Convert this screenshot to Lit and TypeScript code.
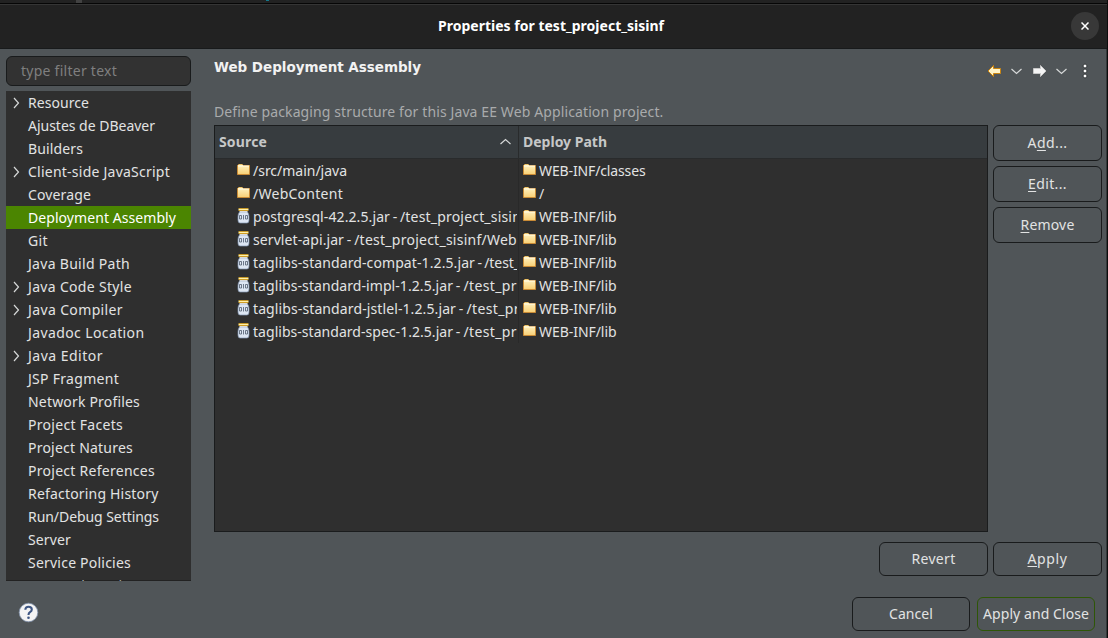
import { LitElement, html, css, nothing } from "lit";
import { customElement, property } from "lit/decorators.js";

/* A single line of text whose tracking is adjusted to fill a given advance width. */
@customElement("ui-label")
class UiLabel extends LitElement {
  @property({ type: Number }) width = 0;
  @property() text = "";
  @property() mnemonic = "";

  static styles = css`
    :host { display: block; flex: none; white-space: pre; }
    .line { display: inline-block; }
    .key { text-decoration: underline; text-underline-offset: 2px; text-decoration-thickness: 1px; text-decoration-skip-ink: none; }
  `;

  async updated() {
    await document.fonts.ready;
    const line = this.renderRoot.querySelector<HTMLElement>(".line")!;
    line.style.letterSpacing = "0px";
    const natural = line.getBoundingClientRect().width;
    if (this.width) line.style.letterSpacing = `${(this.width - natural) / this.text.length}px`;
  }

  render() {
    const i = this.mnemonic ? this.text.indexOf(this.mnemonic) : -1;
    return i < 0
      ? html`<span class="line">${this.text}</span>`
      : html`<span class="line">${this.text.slice(0, i)}<span class="key">${this.mnemonic}</span>${this.text.slice(i + 1)}</span>`;
  }
}

type TreeItem = [name: string, width: number, expandable?: boolean];

const TREE: TreeItem[] = [
  ["Resource", 61, true],
  ["Ajustes de DBeaver", 127],
  ["Builders", 55],
  ["Client-side JavaScript", 142, true],
  ["Coverage", 63],
  ["Deployment Assembly", 148],
  ["Git", 20],
  ["Java Build Path", 102],
  ["Java Code Style", 104, true],
  ["Java Compiler", 95, true],
  ["Javadoc Location", 116.5],
  ["Java Editor", 75, true],
  ["JSP Fragment", 91],
  ["Network Profiles", 112],
  ["Project Facets", 95],
  ["Project Natures", 105],
  ["Project References", 127],
  ["Refactoring History", 130.5],
  ["Run/Debug Settings", 131],
  ["Server", 43],
  ["Service Policies", 103],
  ["Targeted Runtimes", 121],
];

interface Entry { icon: "folder" | "jar"; name: string; w: number; path?: string; pw?: number; target: string; tw: number; }

const ENTRIES: Entry[] = [
  { icon: "folder", name: "/src/main/java", w: 94, target: "WEB-INF/classes", tw: 106.5 },
  { icon: "folder", name: "/WebContent", w: 90, target: "/", tw: 6 },
  { icon: "jar", name: "postgresql-42.2.5.jar", w: 137, path: " - /test_project_sisin", pw: 131, target: "WEB-INF/lib", tw: 77.5 },
  { icon: "jar", name: "servlet-api.jar", w: 91, path: " - /test_project_sisinf/Web", pw: 173, target: "WEB-INF/lib", tw: 77.5 },
  { icon: "jar", name: "taglibs-standard-compat-1.2.5.jar", w: 222, path: " - /test_", pw: 45, target: "WEB-INF/lib", tw: 77.5 },
  { icon: "jar", name: "taglibs-standard-impl-1.2.5.jar", w: 200, path: " - /test_pr", pw: 64, target: "WEB-INF/lib", tw: 77.5 },
  { icon: "jar", name: "taglibs-standard-jstlel-1.2.5.jar", w: 203, path: " - /test_pr", pw: 64, target: "WEB-INF/lib", tw: 77.5 },
  { icon: "jar", name: "taglibs-standard-spec-1.2.5.jar", w: 200, path: " - /test_pr", pw: 64, target: "WEB-INF/lib", tw: 77.5 },
];

const folder = html`<svg class="ico" width="14" height="16" viewBox="0 0 14 16">
  <defs><linearGradient id="f" x1="0" y1="0" x2="0" y2="1"><stop offset="0" stop-color="#fff3c4"/><stop offset="1" stop-color="#f8cf74"/></linearGradient></defs>
  <path d="M.5 12.500V3.500L1.500 2.500H5.500L6.500 3.500H12.500V12.500Z" fill="url(#f)" stroke="#c98a35"/>
  <path d="M1 4H12" stroke="#fffbe6"/><path d="M2 2.500H5" stroke="#e9c46a"/>
</svg>`;

const jar = html`<svg class="ico" width="14" height="16" viewBox="0 0 14 16">
  <path d="M2.500 4H10.500Q12 6 12 8.500V12Q12 15 10 15H3Q1 15 1 12V8.500Q1 6 2.500 4Z" fill="#dde6f3" stroke="#8296b3" stroke-width=".7"/>
  <path d="M1.500 .5H11.500" stroke="#c79a2a"/><path d="M1.500 1.500H11.500" stroke="#fff0a8"/><path d="M1.500 2.500H11.500" stroke="#cf9d25"/>
  <path d="M2.500 3.700H10.500" stroke="#f8f9fc"/>
  <path d="M2.500 7.500H4.500V11H2.500ZM6.500 7V11.500M8.500 7.500H10.500V11H8.500Z" fill="none" stroke="#4e5a6c" stroke-width=".8"/>
</svg>`;

const chevron = (d: string, w: number, h: number) =>
  html`<svg width=${w} height=${h} viewBox="0 0 ${w} ${h}"><path d=${d} fill="none" stroke="#d6d8d8" stroke-width="1.2"/></svg>`;

@customElement("app-root")
class AppRoot extends LitElement {
  static styles = css`
    :host { display: block; }
    * { box-sizing: border-box; }
    svg { display: block; flex: none; }
    .window {
      width: 1108px; height: 638px; overflow: hidden; display: flex; flex-direction: column;
      background: #505558; color: #e2e3e3; font: 14px/23px "Noto Sans", "Open Sans", sans-serif;
      border-right: 1px solid #0c0c0c;
    }
    .behind { height: 3px; flex: none; background: #222; display: flex; }
    .mark { width: 6px; height: 3px; margin-left: 76px; background: #424242; }
    .dot { width: 3px; height: 1px; margin-left: 184px; background: #14798c; }
    .title {
      height: 46px; flex: none; background: #222; border-top: 1px solid #060606; border-bottom: 1px solid #181a1b;
      box-shadow: inset 0 1px #353535; display: grid; grid-template-columns: 1fr auto 1fr; align-items: center;
      font-weight: 700; color: #fff; padding-right: 8px; padding-left: 3px;
    }
    .title ui-label { grid-column: 2; padding-bottom: 2px; }
    .close { justify-self: end; width: 28px; height: 28px; border-radius: 50%; background: #383838; display: grid; place-items: center; }
    .main { height: 533px; flex: none; display: flex; border-right: 1px solid #34383a; }
    .side { width: 191px; padding: 7px 0 0 6px; flex: none; }
    .filter { height: 30px; border: 1px solid #191b1c; border-radius: 6px; background: #323232; color: #7f7f7f; padding: 2px 14px; }
    .tree { margin-top: 5px; height: 490px; overflow: hidden; background: linear-gradient(#222, #222) 0 100% / 100% 1px no-repeat #2f2f2f; }
    .node { height: 23px; display: flex; }
    .node:last-child { color: #b0b1b1; }
    .selected { background: #4b8501; color: #fff; }
    .twisty { width: 22px; padding: 6px 0 0 7px; }
    .pane { width: 888px; margin-left: 23px; padding-top: 6px; flex: none; }
    .head { display: flex; height: 45px; }
    .heading { font: 700 13.500px/24px "DejaVu Sans", sans-serif; flex: 1; color: #f2f2f2; }
    .tools { width: 115px; display: flex; align-items: center; height: 32px; }
    .gap { margin: 0 10px 0 9px; }
    .gap.last { margin-right: 15px; }
    .hint { color: #a9abac; height: 25px; }
    .content { display: flex; gap: 5px; }
    .table { width: 774px; height: 407px; border: 1px solid #1a1c1d; background: #2f2f2f; }
    .thead { display: flex; height: 33px; background: #373c3f; border-bottom: 1px solid #292b2c; font-weight: 700; color: #c6c8c8; line-height: 32px; padding-left: 4px; }
    .src { width: 300px; border-right: 1px solid #292b2c; display: flex; justify-content: space-between; align-items: center; padding-right: 7px; }
    .dst { padding-left: 4px; }
    .rows { background: linear-gradient(#292929, #292929) 303px 0 / 1px 100% no-repeat; }
    .row { display: flex; height: 23px; }
    .cell { display: flex; width: 302px; margin-right: 1px; padding-left: 22px; overflow: hidden; }
    .cell.to { padding-left: 5px; width: 200px; }
    .path { word-spacing: -1.200px; }
    .ico { margin: 3px 2px 0 0; }
    .buttons { display: flex; flex-direction: column; gap: 5px; }
    .btn { border: 1px solid #191b1c; border-radius: 6px; width: 109px; height: 36px; padding-bottom: 2px; display: flex; justify-content: center; align-items: center; background: #505558; }
    .short { height: 34px; }
    .wide { width: 118px; }
    .primary { border-color: #2e5606; }
    .apply { display: flex; justify-content: flex-end; gap: 5px; margin-top: 10px; }
    .footer { display: flex; flex: 1; padding: 15px 11px 0 17.500px; align-items: flex-start; border-right: 1px solid #34383a; }
    .help { margin-top: 4.500px; margin-right: auto; }
    .footer .primary { margin-left: 7px; }
  `;

  button(text: string, width: number, mnemonic = "", kind = "") {
    return html`<div class="btn ${kind}"><ui-label .text=${text} .width=${width} .mnemonic=${mnemonic}></ui-label></div>`;
  }

  render() {
    const label = (text: string, width: number, kind = "") => html`<ui-label class=${kind} .text=${text} .width=${width}></ui-label>`;
    return html`<div class="window">
      <div class="behind"><div class="mark"></div><div class="dot"></div></div>
      <div class="title">
        ${label("Properties for test_project_sisinf", 226)}
        <div class="close"><svg width="8" height="8" viewBox="0 0 8 8"><path d="M.5 .5L7.500 7.500M7.500 .5L.5 7.500" stroke="#fff" stroke-width="1.500"/></svg></div>
      </div>
      <div class="main">
        <div class="side">
          <div class="filter">${label("type filter text", 96)}</div>
          <div class="tree">${TREE.map(([name, width, open]) => html`
            <div class="node ${name === "Deployment Assembly" ? "selected" : ""}">
              <div class="twisty">${open ? chevron("M1 1L5.500 6L1 11", 8, 12) : nothing}</div>
              ${label(name, width)}
            </div>`)}</div>
        </div>
        <div class="pane">
          <div class="head">
            <div class="heading">${label("Web Deployment Assembly", 207)}</div>
            <div class="tools">
              <svg width="15" height="14" viewBox="0 0 15 14"><path d="M1 7L6.500 1.500V4.500H13.500V9.500H6.500V12.500Z" fill="#fff3c6" stroke="#c98410"/></svg>
              <span class="gap">${chevron("M.5 1L5.500 5.500L10.500 1", 11, 7)}</span>
              <svg width="15" height="14" viewBox="0 0 15 14"><path d="M14 7L8.500 1.500V4.500H1.500V9.500H8.500V12.500Z" fill="#f4f4f4" stroke="#c7c7c7"/></svg>
              <span class="gap last">${chevron("M.5 1L5.500 5.500L10.500 1", 11, 7)}</span>
              <svg width="6" height="16" viewBox="0 0 6 16"><g fill="#fff" stroke="#34383a" stroke-width="1"><circle cx="3" cy="3" r="2"/><circle cx="3" cy="8" r="2"/><circle cx="3" cy="13" r="2"/></g></svg>
            </div>
          </div>
          <div class="hint">${label("Define packaging structure for this Java EE Web Application project.", 449.5)}</div>
          <div class="content">
            <div class="table">
              <div class="thead">
                <div class="src">${label("Source", 48)}${chevron("M.5 6L5.500 1.500L10.500 6", 11, 8)}</div>
                <div class="dst">${label("Deploy Path", 84)}</div>
              </div>
              <div class="rows">${ENTRIES.map((e) => html`
                <div class="row">
                  <div class="cell">${e.icon === "jar" ? jar : folder}${label(e.name, e.w)}${e.path ? label(e.path, e.pw!, "path") : nothing}</div>
                  <div class="cell to">${folder}${label(e.target, e.tw)}</div>
                </div>`)}</div>
            </div>
            <div class="buttons">
              ${this.button("Add...", 40, "d")}
              ${this.button("Edit...", 39, "E")}
              ${this.button("Remove", 54, "R")}
            </div>
          </div>
          <div class="apply">
            ${this.button("Revert", 44, "", "short")}
            ${this.button("Apply", 40, "A", "short")}
          </div>
        </div>
      </div>
      <div class="footer">
        <svg class="help" width="21" height="21" viewBox="0 0 21 21">
          <circle cx="10.500" cy="10.500" r="9.300" fill="#f4f4f4" stroke="#8494ae" stroke-width=".8"/>
          <path d="M7.300 7.800Q7.500 4.800 10.500 4.800Q13.800 4.800 13.800 7.500Q13.800 9 12 10.100Q10.500 11.100 10.500 13" fill="none" stroke="#3e5683" stroke-width="2.100"/>
          <circle cx="10.500" cy="15.700" r="1.300" fill="#3e5683"/>
        </svg>
        ${this.button("Cancel", 44, "", "short wide")}
        ${this.button("Apply and Close", 106, "", "short wide primary")}
      </div>
    </div>`;
  }
}
